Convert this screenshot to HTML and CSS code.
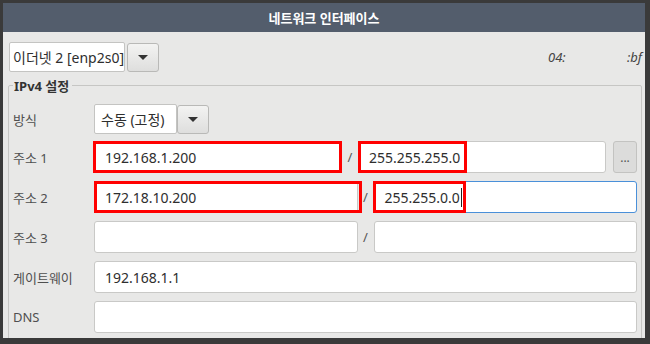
FILE: index.html
```html
<!DOCTYPE html>
<html lang="ko">
<head>
    <meta charset="UTF-8">
    <title>네트워크 인터페이스</title>
    <link rel="stylesheet" href="styles.css">
</head>
<body>
    <div class="window">
        <div class="titlebar">네트워크 인터페이스</div>

        <div class="content">
            <div class="toprow">
                <div class="combo combo-dev">이더넷 2 [enp2s0]</div>
                <div class="drop"><span class="arrow"></span></div>
                <div class="mac">
                    <span>04:</span>
                    <span>:bf</span>
                </div>
            </div>

            <fieldset class="group">
                <legend>IPv4 설정</legend>

                <div class="rows">
                    <div class="row">
                        <span class="lbl">방식</span>
                        <div class="combo combo-mode">수동 (고정)</div>
                        <div class="drop"><span class="arrow"></span></div>
                    </div>

                    <div class="row">
                        <span class="lbl">주소 1</span>
                        <div class="field">192.168.1.200<span class="mark mark-a1"></span></div>
                        <span class="slash">/</span>
                        <div class="field">255.255.255.0<span class="mark mark-m1"></span></div>
                        <div class="more">...</div>
                    </div>

                    <div class="row">
                        <span class="lbl">주소 2</span>
                        <div class="field">172.18.10.200<span class="mark mark-a2"></span></div>
                        <span class="slash">/</span>
                        <div class="field focus">255.255.0.0<span class="caret"></span><span class="mark mark-m2"></span></div>
                    </div>

                    <div class="row">
                        <span class="lbl">주소 3</span>
                        <div class="field"></div>
                        <span class="slash">/</span>
                        <div class="field"></div>
                    </div>

                    <div class="row">
                        <span class="lbl">게이트웨이</span>
                        <div class="field">192.168.1.1</div>
                    </div>

                    <div class="row">
                        <span class="lbl">DNS</span>
                        <div class="field"></div>
                    </div>
                </div>
            </fieldset>
        </div>
    </div>
</body>
</html>
```

FILE: styles.css
```css
* { margin: 0px; padding: 0px; box-sizing: border-box;}

body {
    font-family: "Noto Sans", "Noto Sans CJK KR", sans-serif;
    font-size: 14px;
    color: #2e2e2e;
}

.window {
    width: 650px;
    height: 344px;
    background: #3a3a3a;
    padding: 3px 5px 6px 3px;
    display: flex;
    flex-direction: column;
}

.titlebar {
    height: 29px;
    background: #535d6c;
    color: #ffffff;
    font-weight: bold;
    font-size: 13px;
    display: flex;
    align-items: center;
    justify-content: center;
}

.content {
    flex: 1;
    background: #e8e8e7;
    overflow: hidden;
    padding: 10px 3px 0 5px;
}

.toprow {
    display: flex;
    align-items: center;
    gap: 2px;
    height: 30px;
    padding-left: 1px;
}

.combo {
    background: #ffffff;
    border: 1px solid #c4c4c2;
    border-radius: 2px;
    height: 30px;
    display: flex;
    align-items: center;
    padding-left: 3px;
    white-space: nowrap;
}
.combo-dev { width: 116px; }
.combo-mode { width: 83px; padding-left: 6px; }

.drop {
    width: 32px;
    height: 29px;
    border: 1px solid #b9b9b7;
    border-radius: 3px;
    background: linear-gradient(#f3f3f2, #dededd);
    display: flex;
    align-items: center;
    justify-content: center;
}
.arrow {
    width: 0;
    height: 0;
    border-left: 5px solid transparent;
    border-right: 5px solid transparent;
    border-top: 5px solid #333333;
}

.mac {
    margin-left: auto;
    width: 94px;
    display: flex;
    justify-content: space-between;
    font-style: italic;
    font-size: 13px;
    color: #444444;
}

.group {
    margin-top: 4px;
    border: 1px solid #c6c6c4;
    border-radius: 2px;
    padding: 8px 4px 0 4px;
    height: 300px;
}
.group legend {
    font-weight: bold;
    font-size: 13px;
    color: #333333;
    padding: 0 3px 0 1px;
}

.rows {
    display: flex;
    flex-direction: column;
    gap: 8px;
}
.rows .row:first-child { margin-bottom: -2px; }

.row {
    display: flex;
    align-items: center;
    height: 32px;
}

.lbl {
    width: 81px;
    flex: none;
    font-size: 13px;
    color: #4f4f4f;
}

.field {
    flex: 1;
    height: 32px;
    background: #ffffff;
    border: 1px solid #c9c9c7;
    border-radius: 3px;
    padding-left: 10px;
    display: flex;
    align-items: center;
    position: relative;
}
.field.focus { border-color: #4a90d9; }

.caret {
    display: inline-block;
    width: 1px;
    height: 19px;
    background: #222222;
    margin-left: 1px;
}

.slash {
    width: 16px;
    flex: none;
    text-align: center;
    color: #555555;
    font-size: 13px;
}

.more {
    width: 24px;
    height: 32px;
    flex: none;
    margin-left: 7px;
    background: #dcdcdb;
    border: 1px solid #c3c3c1;
    border-radius: 3px;
    color: #555555;
    font-size: 12px;
    display: flex;
    align-items: center;
    justify-content: center;
}

/* red highlight boxes drawn over the fields */
.mark {
    position: absolute;
    top: -1px;
    bottom: -1px;
    border: 3px solid #ff0000;
}
.mark-a1 { left: -2px; right: -1px; }
.mark-m1 { left: -1px; width: 109px; }
.mark-a2 { left: -1px; right: -5px; }
.mark-m2 { left: -2px; width: 93px; }
```
